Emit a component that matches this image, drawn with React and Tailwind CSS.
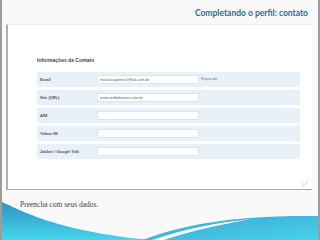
import React from 'react';

const rows = [
  { label: 'Email', value: 'malouragomes@bol.com.br', note: 'Requerido' },
  { label: 'Site (URL)', value: 'www.wdbdimaos.com.br' },
  { label: 'AIM', value: '' },
  { label: 'Yahoo IM', value: '' },
  { label: 'Jabber / Google Talk', value: '' },
];

const Wave = () => (
  <svg className="absolute left-0 bottom-0" width="316" height="45" viewBox="0 0 316 45">
    <defs>
      <linearGradient id="gl" x1="0" y1="0" x2="0" y2="1">
        <stop offset="0" stopColor="#2f93c4" />
        <stop offset="1" stopColor="#45d6ec" />
      </linearGradient>
      <linearGradient id="gr" x1="0" y1="0" x2="1" y2="1">
        <stop offset="0" stopColor="#3aa6d4" />
        <stop offset="1" stopColor="#48d2ea" />
      </linearGradient>
    </defs>
    <path d="M0,7 C20,16 55,36 148,45 L0,45 Z" fill="url(#gl)" />
    <path d="M140,45 C180,30 230,20 316,21 L316,45 Z" fill="url(#gr)" />
    <path d="M150,45 C180,35 210,28 250,24 C215,30 185,37 162,45 Z" fill="#ffffff" />
  </svg>
);

export default function App() {
  return (
    <div className="relative w-[320px] h-[240px] overflow-hidden bg-[#f9f9f9] border-x-2 border-[#9c9c9c]">
      <div className="flex justify-end pr-[10px] pt-[9px] h-[24px]">
        <h1 className="text-[8.5px] font-bold text-[#1f6f8f] leading-none" style={{ fontFamily: 'Lato, sans-serif' }}>
          Completando o perfil: contato
        </h1>
      </div>

      <div className="relative ml-[4px] mr-[6px] h-[166px] bg-white border-l-2 border-b border-t border-t-[#eeeeee] border-l-[#b0b0b0] border-b-[#a8a8a8] pl-[29px] pr-[12px] pt-[33px]" style={{ fontFamily: '"Liberation Sans", sans-serif' }}>
        <div className="text-[5px] font-bold text-[#444] leading-none mb-[9px]">Informações de Contato</div>
        <div className="flex flex-col gap-[3px]">
          {rows.map((r) => (
            <div key={r.label} className="flex items-center h-[15px] bg-[#e8f0f8] pl-[3px]">
              <span className="w-[57px] text-[4px] font-bold text-[#555] leading-none">{r.label}</span>
              <div className="w-[102px] h-[9px] bg-white border border-[#dde4ea] flex items-center pl-[2px] text-[4px] text-[#666] leading-none">
                {r.value}
              </div>
              {r.note && <span className="ml-[2px] text-[3.5px] text-[#777] leading-none">{r.note}</span>}
            </div>
          ))}
        </div>
        <svg className="absolute right-[4px] bottom-[2px]" width="6" height="6" viewBox="0 0 6 6">
          <path d="M0,6 L6,0 M0,0 L0,6" stroke="#c8c8c8" strokeWidth="0.8" fill="none" />
        </svg>
      </div>

      <Wave />
      <div className="relative pl-[18px] pt-[11px] text-[7.5px] text-[#444] leading-none" style={{ fontFamily: '"Liberation Serif", serif' }}>
        Preencha com seus dados.
      </div>
    </div>
  );
}
